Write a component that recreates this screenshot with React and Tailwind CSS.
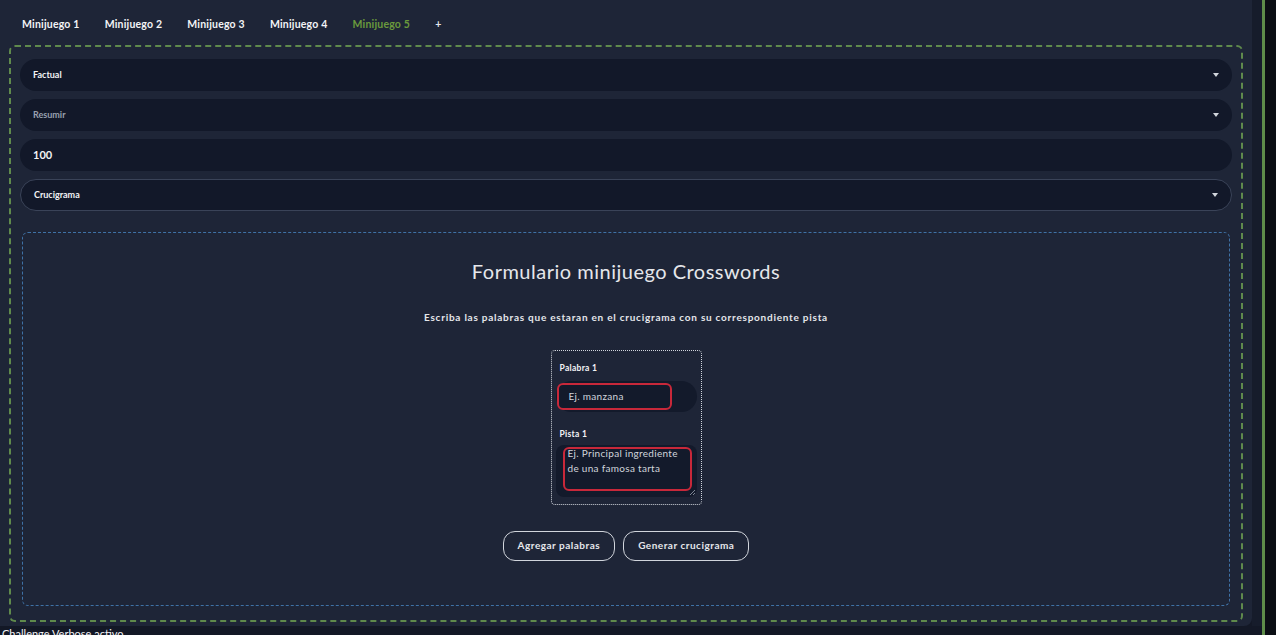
import { useState } from 'react'

const TABS = ['Minijuego 1', 'Minijuego 2', 'Minijuego 3', 'Minijuego 4', 'Minijuego 5']

function Caret() {
  return (
    <svg width="6" height="4" viewBox="0 0 6 4" className="fill-gray-300">
      <path d="M0 0h6L3 4z" />
    </svg>
  )
}

function SelectRow({ label, muted, bordered }) {
  return (
    <div
      className={`flex h-[32px] items-center justify-between rounded-full bg-[#121829] pl-[13px] pr-[13px] ${
        bordered ? 'border border-[#3a4358]' : ''
      }`}
    >
      <span className={`text-[9px] font-bold ${muted ? 'text-gray-400' : 'text-gray-100'}`}>{label}</span>
      <Caret />
    </div>
  )
}

export default function App() {
  const [active] = useState(4)

  return (
    <div className="flex h-[635px] w-[1276px] overflow-hidden bg-[#0b0e14] font-['Lato',sans-serif]">
      <div className="flex w-[1262px] flex-col bg-[#131826]">
        <div className="flex">
          <div className="h-[626px] w-[1252px] rounded-br-lg bg-[#1e2537]">
            <nav className="flex h-[45px] items-center gap-[25px] pl-[22px] pt-[5px] text-[10.5px] font-bold tracking-[0.2px]">
              {TABS.map((t, i) => (
                <span key={t} className={i === active ? 'text-[#6a9a3c]' : 'text-gray-100'}>
                  {t}
                </span>
              ))}
              <span className="text-gray-200">+</span>
            </nav>

            <div className="mx-[9px] flex h-[577px] flex-col rounded-md border-2 border-dashed border-[#5f8a4c] px-[9px] pt-[12px]">
              <div className="flex flex-col gap-[8px]">
                <SelectRow label="Factual" />
                <SelectRow label="Resumir" muted />
                <div className="flex h-[32px] items-center rounded-full bg-[#121829] pl-[13px]">
                  <span className="text-[11px] font-bold text-gray-100">100</span>
                </div>
                <SelectRow label="Crucigrama" bordered />
              </div>

              <div className="mx-[2px] mt-[21px] flex h-[374px] flex-col items-center rounded-md border border-dashed border-[#3f72a6]">
                <h2 className="mt-[23px] text-[20px] tracking-wide text-gray-200">Formulario minijuego Crosswords</h2>
                <p className="mt-[24px] text-[10px] font-bold tracking-[0.75px] text-gray-200">
                  Escriba las palabras que estaran en el crucigrama con su correspondiente pista
                </p>

                <div className="mt-[25px] flex w-[151px] flex-col rounded-sm border border-dotted border-gray-300 px-[4px] pb-[7px] pt-[11px]">
                  <label className="pl-[4px] text-[8.5px] font-bold tracking-[0.3px] text-gray-100">Palabra 1</label>
                  <div className="mt-[6px] flex h-[31px] items-center rounded-full bg-[#131a2b] pl-[1px]">
                    <div className="flex h-[27px] w-[115px] items-center rounded-md border-2 border-[#c8283a] pl-[10px] text-[10px] tracking-[0.3px] text-gray-300">
                      Ej. manzana
                    </div>
                  </div>
                  <label className="mt-[16px] pl-[4px] text-[8.5px] font-bold tracking-[0.3px] text-gray-100">Pista 1</label>
                  <div className="relative mt-[4px] h-[52px] overflow-hidden rounded-lg bg-[#131a2b] pl-[7px] pt-[2px]">
                    <div className="h-[44px] w-[129px] overflow-hidden rounded-md border-2 border-[#c8283a] pl-[3px] pr-[2px]">
                      <p className="-mt-[3px] text-[10px] leading-[15px] tracking-[0.3px] text-gray-300">
                        Ej. Principal ingrediente de una famosa tarta
                      </p>
                    </div>
                    <svg width="5" height="5" viewBox="0 0 5 5" className="absolute bottom-[2px] right-[2px] stroke-gray-400">
                      <path d="M5 0L0 5M5 3L3 5" strokeWidth="0.8" />
                    </svg>
                  </div>
                </div>

                <div className="mt-[26px] flex gap-[8px]">
                  <button className="h-[30px] rounded-xl border border-gray-300 px-[14px] text-[10px] font-bold tracking-[0.5px] text-gray-200">
                    Agregar palabras
                  </button>
                  <button className="h-[30px] rounded-xl border border-gray-300 px-[14px] text-[10px] font-bold tracking-[0.5px] text-gray-200">
                    Generar crucigrama
                  </button>
                </div>
              </div>
            </div>
          </div>
          <div className="w-[10px] bg-[#161c2b]" />
        </div>
        <p className="pl-[2px] pt-[1px] text-[11px] leading-[14px] text-gray-100">Challenge Verbose activo</p>
      </div>
      <div className="w-[3px] bg-[#5e8d4a]" />
    </div>
  )
}
